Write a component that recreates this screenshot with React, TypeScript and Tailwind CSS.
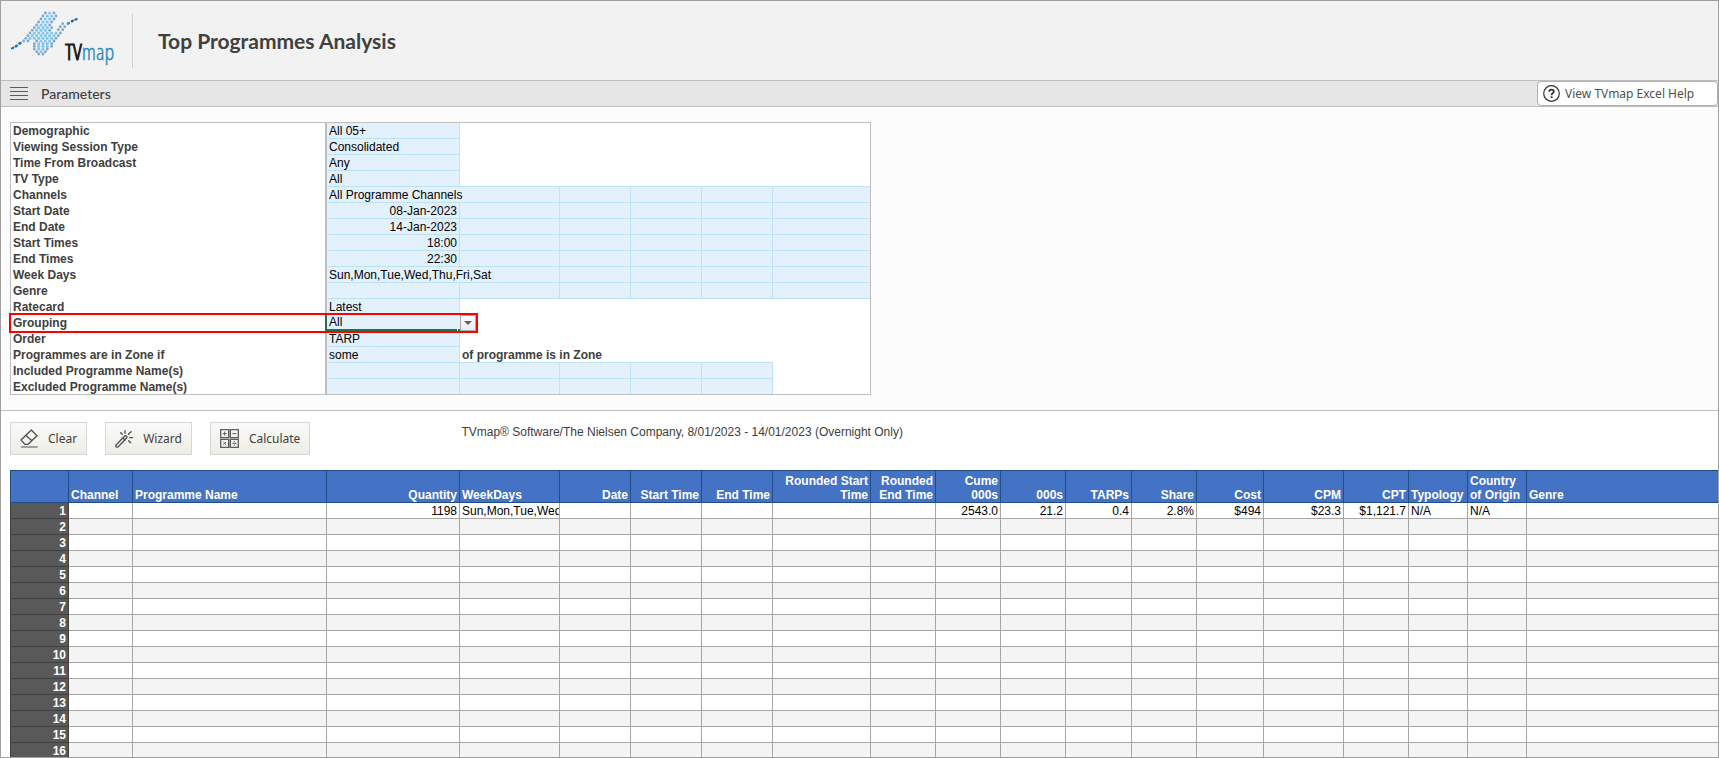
import { useState } from 'react'
import type { ReactNode } from 'react'
import clsx from 'clsx'

type Cell = { text?: string; span?: number; filled?: boolean; right?: boolean; bold?: boolean; line?: boolean }
type Param = { label: string; cells: Cell[] }

const f: Cell = { filled: true, line: true }

const PARAMS: Param[] = [
  { label: 'Demographic', cells: [{ ...f, text: 'All 05+' }, { span: 5 }] },
  { label: 'Viewing Session Type', cells: [{ ...f, text: 'Consolidated' }, { span: 5 }] },
  { label: 'Time From Broadcast', cells: [{ ...f, text: 'Any' }, { span: 5 }] },
  { label: 'TV Type', cells: [{ ...f, text: 'All' }, { span: 5, line: true }] },
  { label: 'Channels', cells: [{ ...f, text: 'All Programme Channels', span: 2 }, f, f, f, f] },
  { label: 'Start Date', cells: [{ ...f, text: '08-Jan-2023', right: true }, f, f, f, f, f] },
  { label: 'End Date', cells: [{ ...f, text: '14-Jan-2023', right: true }, f, f, f, f, f] },
  { label: 'Start Times', cells: [{ ...f, text: '18:00', right: true }, f, f, f, f, f] },
  { label: 'End Times', cells: [{ ...f, text: '22:30', right: true }, f, f, f, f, f] },
  { label: 'Week Days', cells: [{ ...f, text: 'Sun,Mon,Tue,Wed,Thu,Fri,Sat', span: 2 }, f, f, f, f] },
  { label: 'Genre', cells: [f, f, f, f, f, f] },
  { label: 'Ratecard', cells: [{ ...f, text: 'Latest' }, { span: 5 }] },
  { label: 'Grouping', cells: [] },
  { label: 'Order', cells: [{ ...f, text: 'TARP' }, { span: 5 }] },
  {
    label: 'Programmes are in Zone if',
    cells: [{ ...f, text: 'some' }, { text: 'of programme is in Zone', span: 4, bold: true, line: true }, {}],
  },
  { label: 'Included Programme Name(s)', cells: [f, f, f, f, f, {}] },
  { label: 'Excluded Programme Name(s)', cells: [f, f, f, f, f, {}] },
]

const COLUMNS = [
  { label: 'Channel', value: '' },
  { label: 'Programme Name', value: '' },
  { label: 'Quantity', value: '1198', right: true },
  { label: 'WeekDays', value: 'Sun,Mon,Tue,Wed,Thu,Fri,Sat' },
  { label: 'Date', value: '', right: true },
  { label: 'Start Time', value: '', right: true },
  { label: 'End Time', value: '', right: true },
  { label: 'Rounded Start Time', value: '', right: true },
  { label: 'Rounded End Time', value: '', right: true },
  { label: 'Cume 000s', value: '2543.0', right: true },
  { label: '000s', value: '21.2', right: true },
  { label: 'TARPs', value: '0.4', right: true },
  { label: 'Share', value: '2.8%', right: true },
  { label: 'Cost', value: '$494', right: true },
  { label: 'CPM', value: '$23.3', right: true },
  { label: 'CPT', value: '$1,121.7', right: true },
  { label: 'Typology', value: 'N/A' },
  { label: 'Country of Origin', value: 'N/A' },
  { label: 'Genre', value: '' },
]

// Logo dots: [y, first x, count], 13 units apart
const DOT_ROWS = [
  [15, 118, 3], [24, 111, 4], [33, 105, 4], [42, 98, 4], [51, 92, 4], [47, 170, 1], [59, 85, 5], [56, 163, 2],
  [67, 79, 5], [65, 157, 2], [75, 72, 8], [83, 66, 8], [91, 59, 8], [99, 53, 2], [99, 92, 5], [107, 85, 5],
  [115, 85, 5], [123, 85, 4], [131, 92, 3], [138, 98, 2],
]

function Logo() {
  return (
    <svg viewBox="0 -21 360 237" className="h-[79px] w-[120px] shrink-0" aria-label="TVmap">
      {DOT_ROWS.flatMap(([y, x, n]) =>
        Array.from({ length: n }, (_, i) => {
          const edge = i === 0 || i === n - 1
          return (
            <circle key={`${y}-${x}-${i}`} cx={x + i * 13} cy={y} r={edge ? 4.2 : 4.8} fill={edge ? '#7aa6d4' : '#84c6ec'} />
          )
        }),
      )}
      <g fill="#1c70b0">
        <ellipse cx="20" cy="120" rx="5.5" ry="3.6" transform="rotate(-25 20 120)" />
        <ellipse cx="31" cy="114" rx="5.5" ry="4" transform="rotate(-30 31 114)" />
        <ellipse cx="42" cy="106" rx="5.5" ry="4.2" transform="rotate(-30 42 106)" />
        <ellipse cx="187" cy="46" rx="5.5" ry="4.2" transform="rotate(-30 187 46)" fill="#4a8cc4" />
        <ellipse cx="199" cy="39" rx="5.5" ry="4" transform="rotate(-25 199 39)" />
        <ellipse cx="210" cy="34" rx="5.5" ry="3.6" transform="rotate(-20 210 34)" />
      </g>
      <text
        x="178"
        y="156"
        fontSize="67"
        fontWeight="300"
        fontFamily="'Open Sans Condensed Light', 'Open Sans Condensed', 'Liberation Sans Narrow', sans-serif"
        fill="#1d1d1b"
      >
        <tspan stroke="#1d1d1b" strokeWidth="3">TV</tspan>
        <tspan fill="#2387c0" stroke="#2387c0" strokeWidth="1">map</tspan>
      </text>
    </svg>
  )
}

function EraserIcon() {
  return (
    <svg viewBox="0 0 54 57" className="h-[19px] w-[18px]" fill="none" stroke="#505050" strokeWidth="4" strokeLinejoin="round">
      <path d="M34 3 L51 20 L24 46 H15 L3 33 Z" />
      <path d="M17 19 L36 35" />
      <path d="M3 54 H53" stroke="#777" strokeWidth="4" />
    </svg>
  )
}

function WandIcon() {
  return (
    <svg viewBox="0 0 54 54" className="h-[18px] w-[18px]" fill="none" stroke="#505050" strokeWidth="4" strokeLinecap="round">
      <path d="M4 44 L29 18 Q32 16 35 19 Q37 22 34 25 L10 50 Q6 53 3 50 Q1 47 4 44 Z" />
      <path d="M24 24 L30 30" />
      <path d="M30 2 V10 M17 8 L22 13 M48 5 L40 13 M44 23 H53 M41 32 L47 38" />
    </svg>
  )
}

function CalculateIcon() {
  return (
    <svg viewBox="0 0 57 57" className="h-[19px] w-[19px]" fill="none" stroke="#606060" strokeWidth="4">
      <path d="M2 2 H26 V26 H2 Z M31 2 H55 V26 H31 Z M2 31 H26 V55 H2 Z M31 31 H55 V55 H31 Z" />
      <path
        d="M8 14 H20 M14 8 V20 M37 14 H49 M10 39 L18 47 M18 39 L10 47 M37 43 H49 M43 36 V39 M43 47 V50"
        strokeWidth="3"
      />
    </svg>
  )
}

function ToolButton({ icon, children }: { icon: ReactNode; children: ReactNode }) {
  return (
    <button
      type="button"
      className="flex h-[33px] items-center gap-[10px] border border-[#d6d6d6] bg-linear-to-b from-[#fafafa] to-[#eeede4] px-[9px] font-['Noto_Sans'] text-[12px] text-[#404040]"
    >
      {icon}
      {children}
    </button>
  )
}

function GroupingRow() {
  const [grouping, setGrouping] = useState('All')

  return (
    <tr className="h-4">
      <th scope="row" className="relative border-r-2 border-[#217346] pt-px pb-0 pl-[2px] text-left align-top">
        <label htmlFor="grouping">Grouping</label>
        {/* Highlight around the row */}
        <span className="pointer-events-none absolute -top-[2px] -left-[2px] z-10 h-5 w-[469px] border-2 border-[#fe0000]" />
      </th>
      <td colSpan={6} className="p-0">
        <div className="relative flex h-4 w-[149px]">
          <select
            id="grouping"
            value={grouping}
            onChange={(e) => setGrouping(e.target.value)}
            className="h-4 w-[133px] appearance-none rounded-none border-b-2 border-[#217346] bg-[#e3f1fd] pl-[2px] leading-[14px] text-black outline-none"
          >
            <option>All</option>
            <option>Programme</option>
            <option>Channel</option>
          </select>
          <span className="absolute bottom-0 left-[130px] size-[3px] border-t border-l border-white bg-[#217346]" />
          <span className="pointer-events-none flex h-4 w-4 items-center justify-center border border-[#ababab] bg-linear-to-b from-white to-[#e8ebf0]">
            <svg viewBox="0 0 8 4" className="h-1 w-2" fill="#606060">
              <path d="M0 0 H8 L4 4 Z" />
            </svg>
          </span>
        </div>
      </td>
    </tr>
  )
}

function ParameterTable() {
  return (
    <table className="w-[861px] table-fixed border-separate border-spacing-0 border border-[#bfbfbf] bg-white leading-[14px]">
      <colgroup>
        <col className="w-[316px]" />
        <col className="w-[133px]" />
        <col className="w-[100px]" />
        <col className="w-[71px]" />
        <col className="w-[71px]" />
        <col className="w-[71px]" />
        <col className="w-[97px]" />
      </colgroup>
      <tbody>
        {PARAMS.map(({ label, cells }, row) => {
          if (label === 'Grouping') return <GroupingRow key={label} />
          const last = row === PARAMS.length - 1
          return (
            <tr key={label} className={last ? 'h-[15px]' : 'h-4'}>
              <th scope="row" className="border-r-2 border-[#bfbfbf] pt-px pb-0 pl-[2px] text-left align-top">
                {label}
              </th>
              {cells.map((cell, i) => (
                <td
                  key={i}
                  colSpan={cell.span}
                  className={clsx(
                    'border-[#bde3f8] px-[2px] pt-px pb-0 align-top whitespace-nowrap',
                    cell.filled && 'bg-[#e3f1fd] text-black',
                    cell.filled && i < cells.length - 1 && 'border-r',
                    cell.line && !last && 'border-b',
                    cell.right && 'text-right',
                    cell.bold && 'font-bold',
                  )}
                >
                  {cell.text}
                </td>
              ))}
            </tr>
          )
        })}
      </tbody>
    </table>
  )
}

function ResultsTable() {
  return (
    <table className="w-full table-fixed border-separate border-spacing-0 leading-[14px]">
      <colgroup>
        <col className="w-[59px]" />
        <col className="w-[64px]" />
        <col className="w-[194px]" />
        <col className="w-[133px]" />
        <col className="w-[100px]" />
        <col className="w-[71px]" />
        <col className="w-[71px]" />
        <col className="w-[71px]" />
        <col className="w-[98px]" />
        <col className="w-[65px]" />
        <col className="w-[65px]" />
        <col className="w-[65px]" />
        <col className="w-[66px]" />
        <col className="w-[65px]" />
        <col className="w-[67px]" />
        <col className="w-[80px]" />
        <col className="w-[65px]" />
        <col className="w-[59px]" />
        <col className="w-[59px]" />
        <col />
      </colgroup>
      <thead>
        <tr className="h-[33px] bg-[#4472c4] text-white">
          <th className="border border-[#1f4e87]" aria-label="Row" />
          {COLUMNS.map(({ label, right }) => (
            <th
              key={label}
              scope="col"
              className={clsx(
                'border-t border-r border-b border-[#1f4e87] px-[2px] py-0 align-bottom last:border-r-0',
                right ? 'text-right' : 'text-left',
              )}
            >
              {label}
            </th>
          ))}
        </tr>
      </thead>
      <tbody>
        {Array.from({ length: 16 }, (_, row) => (
          <tr key={row} className="h-4 even:bg-[#f4f4f4]">
            <th
              scope="row"
              className="border-r border-b border-l border-[#404040] bg-[#595959] px-[2px] pt-px pb-0 text-right text-white"
            >
              {row + 1}
            </th>
            {COLUMNS.map(({ label, value, right }) => (
              <td
                key={label}
                className={clsx(
                  'overflow-hidden border-r border-b border-[#a6a6a6] px-[2px] pt-px pb-0 whitespace-nowrap text-black last:border-r-0',
                  right && 'text-right',
                )}
              >
                {row === 0 && value}
              </td>
            ))}
          </tr>
        ))}
      </tbody>
    </table>
  )
}

export default function App() {
  return (
    <div className="relative flex h-screen flex-col overflow-hidden border border-[#a0a0a0] bg-white font-['Liberation_Sans',sans-serif] text-[12px] text-[#404040]">
      <header className="flex h-20 shrink-0 items-center border-b border-[#bfbfbf] bg-[#f2f2f2] pl-[5px]">
        <Logo />
        <div className="ml-[6px] h-[54px] w-px bg-[#d0d0d0]" />
        <h1 className="ml-[25px] font-['Lato'] text-[21px] font-bold">Top Programmes Analysis</h1>
      </header>

      <div className="flex h-[26px] shrink-0 items-center border-b border-[#bfbfbf] bg-[#e6e6e6] pl-[9px]">
        <button type="button" aria-label="Menu" className="flex flex-col gap-[3px]">
          <span className="h-px w-[18px] bg-[#5a5f57]" />
          <span className="h-px w-[18px] bg-[#5a5f57]" />
          <span className="h-px w-[18px] bg-[#5a5f57]" />
          <span className="h-px w-[18px] bg-[#5a5f57]" />
        </button>
        <h2 className="ml-[13px] font-['Lato'] text-[14px] font-medium">Parameters</h2>
        <a
          href="#help"
          className="ml-auto flex h-[25px] w-[181px] items-center gap-[5px] rounded-[4px] border border-[#b0b0b0] bg-white pl-[5px] font-['Noto_Sans'] text-[12px] text-[#505050]"
        >
          <svg viewBox="0 0 17 17" className="size-[17px]" fill="none" stroke="#333">
            <circle cx="8.5" cy="8.5" r="7.8" strokeWidth="1.2" />
            <path d="M6.200 6.800 Q6.300 4.600 8.500 4.600 Q10.800 4.600 10.800 6.500 Q10.800 7.600 9.600 8.300 Q8.600 8.900 8.600 10.200" strokeWidth="1.800" />
            <path d="M8.600 11.300 V13" strokeWidth="1.900" />
          </svg>
          View TVmap Excel Help
        </a>
      </div>

      <section className="shrink-0 border-b border-[#bfbfbf] bg-[#fcfcfc] px-[9px] py-[15px]">
        <ParameterTable />
      </section>

      <section className="pt-[11px] pl-[9px]">
        <div className="mb-[15px] flex items-center gap-[18px]">
          <ToolButton icon={<EraserIcon />}>Clear</ToolButton>
          <ToolButton icon={<WandIcon />}>Wizard</ToolButton>
          <ToolButton icon={<CalculateIcon />}>Calculate</ToolButton>
          <p className="ml-[133px] self-start leading-5">
            TVmap® Software/The Nielsen Company, 8/01/2023 - 14/01/2023 (Overnight Only)
          </p>
        </div>
        <ResultsTable />
      </section>

      {/* Selected column marker */}
      <div className="absolute -top-px left-[325px] h-px w-[134px] bg-[#217346]" />
    </div>
  )
}
